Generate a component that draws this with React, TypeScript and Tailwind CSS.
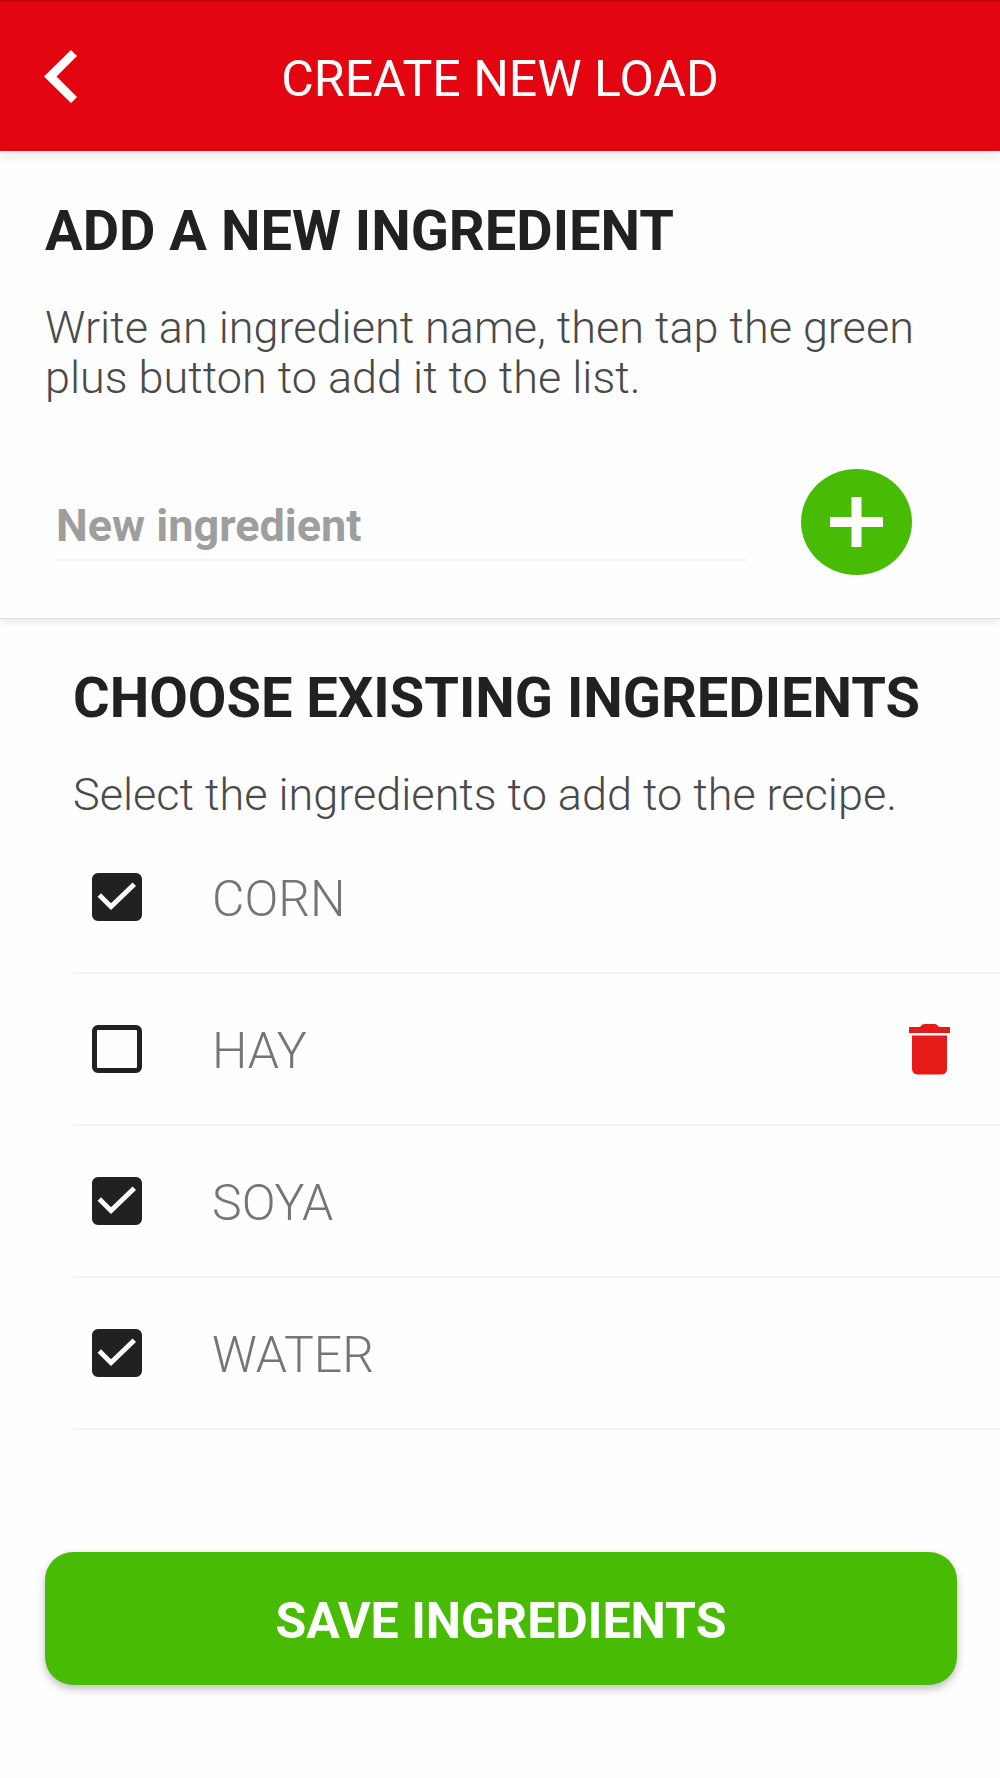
import {useState} from 'react'
import type {FormEvent} from 'react'

type Ingredient = {name: string; checked: boolean; removable?: boolean}

const initialIngredients: Ingredient[] = [
  {name: 'CORN', checked: true},
  {name: 'HAY', checked: false, removable: true},
  {name: 'SOYA', checked: true},
  {name: 'WATER', checked: true},
]

function Header() {
  return (
    <header className="grid grid-cols-[120px_1fr_120px] items-center h-[151px] border-t-2 border-[#c4060f] bg-[#e30611] text-white shadow-[0_4px_12px_rgba(0,0,0,0.09)]">
      <button type="button" aria-label="Back" className="pl-11">
        <svg viewBox="0 0 33 53" className="w-[33px] h-[53px]" fill="currentColor">
          <path d="M27 0 33 6 12.5 26.5 33 47l-6 6L0 26.5z" />
        </svg>
      </button>
      <h1 className="pt-1 text-center text-[50px] leading-[56px]">CREATE NEW LOAD</h1>
    </header>
  )
}

function SectionText({title, text}: {title: string; text: string}) {
  return (
    <>
      <h2 className="text-[56px] leading-[60px] font-bold text-[#212121]">{title}</h2>
      <p className="pt-[42px] text-[45px] leading-[50px] font-light text-[#4a4a4a]">{text}</p>
    </>
  )
}

function IngredientRow({
  ingredient,
  onToggle,
  onRemove,
}: {
  ingredient: Ingredient
  onToggle: () => void
  onRemove: () => void
}) {
  return (
    <li className="flex items-center justify-between h-[152px] border-b-2 border-[#f3f3f3] pr-[50px]">
      <label className="flex items-center gap-[70px] pl-[19px]">
        <span className="grid">
          <input
            type="checkbox"
            checked={ingredient.checked}
            onChange={onToggle}
            className="peer col-start-1 row-start-1 appearance-none w-[50px] h-12 rounded-md border-5 border-[#212121] checked:bg-[#212121]"
          />
          <svg
            viewBox="0 0 50 48"
            className="col-start-1 row-start-1 w-[50px] h-12 pointer-events-none invisible peer-checked:visible"
            fill="white"
          >
            <path d="M5.5 23.7 9 20.3l10 9.9L40.6 9.6 44 13 19 37z" />
          </svg>
        </span>
        <span className="pt-1 text-[50px] leading-[56px] font-light text-[#757575]">{ingredient.name}</span>
      </label>
      {ingredient.removable ? (
        <button type="button" aria-label={`Delete ${ingredient.name}`} onClick={onRemove}>
          <svg viewBox="0 0 41 51" className="w-[41px] h-[51px]" fill="#e61b17">
            <path d="M0 3h11q2-3 4-3h11q2 0 4 3h11v6H0zM3 11.5h35v33q0 6-6 6H9q-6 0-6-6z" />
          </svg>
        </button>
      ) : null}
    </li>
  )
}

export default function App() {
  const [ingredients, setIngredients] = useState(initialIngredients)
  const [name, setName] = useState('')

  const addIngredient = (e: FormEvent) => {
    e.preventDefault()
    const value = name.trim().toUpperCase()
    if (!value || ingredients.some((i) => i.name === value)) return
    setIngredients([...ingredients, {name: value, checked: true, removable: true}])
    setName('')
  }

  const toggle = (target: string) =>
    setIngredients(ingredients.map((i) => (i.name === target ? {...i, checked: !i.checked} : i)))

  return (
    <div className="flex flex-col min-h-screen bg-[#fefefe] font-[Roboto,sans-serif]">
      <Header />
      <main className="flex flex-col grow">
        <section className="border-b border-[#dcdcdc] px-[45px] pt-[50px] pb-[43px] shadow-[0_6px_6px_-2px_rgba(0,0,0,0.08)]">
          <SectionText
            title="ADD A NEW INGREDIENT"
            text="Write an ingredient name, then tap the green plus button to add it to the list."
          />
          <form onSubmit={addIngredient} className="flex items-center gap-[55px] pt-[66px] pl-[11px] pr-[43px]">
            <input
              type="text"
              aria-label="New ingredient"
              placeholder="New ingredient"
              value={name}
              onChange={(e) => setName(e.target.value)}
              className="grow min-w-0 h-[78px] pt-2 border-b-2 border-[#f3f3f3] text-[45px] font-bold text-[#212121] placeholder:text-[#9e9e9e] outline-none"
            />
            <button
              type="submit"
              aria-label="Add ingredient"
              className="grid place-items-center shrink-0 w-[111px] h-[106px] rounded-[50%] bg-[#48bb04]"
            >
              <svg viewBox="0 0 53 50" className="w-[53px] h-[50px]" stroke="white" strokeWidth="10">
                <path d="M26.5 0v50M0 25h53" />
              </svg>
            </button>
          </form>
        </section>
        <section className="pl-[73px] pt-[49px]">
          <SectionText
            title="CHOOSE EXISTING INGREDIENTS"
            text="Select the ingredients to add to the recipe."
          />
          <ul className="pt-0.5">
            {ingredients.map((ingredient) => (
              <IngredientRow
                key={ingredient.name}
                ingredient={ingredient}
                onToggle={() => toggle(ingredient.name)}
                onRemove={() => setIngredients(ingredients.filter((i) => i !== ingredient))}
              />
            ))}
          </ul>
        </section>
        <div className="pl-[45px] pr-[43px] pt-[122px] pb-10">
          <button
            type="button"
            className="w-full h-[133px] pt-1 rounded-[28px] bg-[#48bb04] text-[50px] leading-[56px] font-bold text-white shadow-[0_4px_8px_rgba(0,0,0,0.25)]"
          >
            SAVE INGREDIENTS
          </button>
        </div>
      </main>
    </div>
  )
}
